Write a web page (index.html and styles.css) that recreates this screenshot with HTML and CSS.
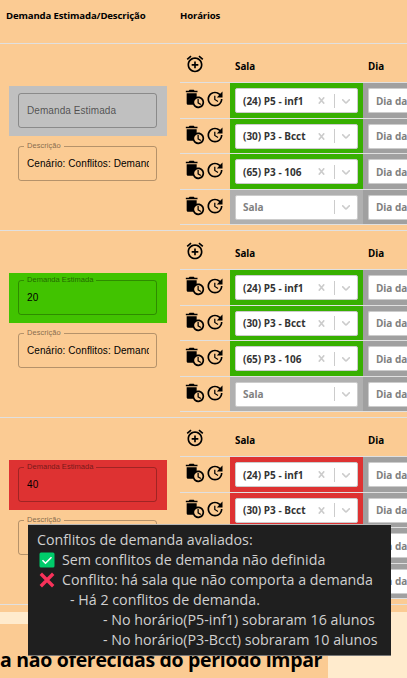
FILE: index.html
```html
<!DOCTYPE html>
<html lang="pt-BR">
<head>
<meta charset="utf-8">
<title>Turmas</title>
<link rel="stylesheet" href="styles.css">
</head>
<body>
<svg class="defs" width="0" height="0" aria-hidden="true">
  <symbol id="alarm" viewBox="0 0 24 24"><path d="M7.88 3.39L6.6 1.86 2 5.71l1.29 1.53 4.59-3.85zM22 5.72l-4.6-3.86-1.29 1.53 4.6 3.86L22 5.72zM12 4c-4.97 0-9 4.03-9 9s4.02 9 9 9c4.97 0 9-4.03 9-9s-4.03-9-9-9zm0 16c-3.87 0-7-3.13-7-7s3.13-7 7-7 7 3.13 7 7-3.13 7-7 7zm1-11h-2v3H8v2h3v3h2v-3h3v-2h-3V9z"/></symbol>
  <symbol id="trash" viewBox="0 0 24 24"><path d="M15 2h-3.5l-1-1h-5l-1 1H1v2h14V2z"/><path d="M16 9c-.7 0-1.37.1-2 .29V5H2v12c0 1.1.9 2 2 2h5.68A6.999 6.999 0 0023 16c0-3.87-3.13-7-7-7zm0 12c-2.76 0-5-2.24-5-5s2.24-5 5-5 5 2.24 5 5-2.24 5-5 5z"/><path d="M16.5 12H15v5l3.6 2.1.8-1.2-2.9-1.7z"/></symbol>
  <symbol id="update" viewBox="0 0 24 24"><path d="M21 10.12h-6.78l2.74-2.82c-2.73-2.7-7.15-2.8-9.88-.1-2.73 2.71-2.73 7.08 0 9.79s7.15 2.71 9.88 0C18.32 15.65 19 14.08 19 12.1h2c0 1.98-.88 4.55-2.64 6.29-3.51 3.48-9.21 3.48-12.72 0-3.5-3.47-3.53-9.11-.02-12.58s9.14-3.47 12.65 0L21 3v7.12zM12.5 8v4.25l3.5 2.08-.72 1.21L11 13V8h1.5z"/></symbol>
  <symbol id="cross" viewBox="0 0 20 20"><path d="M14.348 14.849c-0.469 0.469-1.229 0.469-1.697 0l-2.651-3.030-2.651 3.029c-0.469 0.469-1.229 0.469-1.697 0-0.469-0.469-0.469-1.229 0-1.697l2.758-3.15-2.759-3.152c-0.469-0.469-0.469-1.228 0-1.697s1.228-0.469 1.697 0l2.652 3.031 2.651-3.031c0.469-0.469 1.228-0.469 1.697 0s0.469 1.229 0 1.697l-2.758 3.152 2.758 3.15c0.469 0.469 0.469 1.229 0 1.698z"/></symbol>
  <symbol id="chevron" viewBox="0 0 20 20"><path d="M4.516 7.548c0.436-0.446 1.043-0.481 1.576 0l3.908 3.747 3.908-3.747c0.533-0.481 1.141-0.446 1.574 0 0.436 0.445 0.408 1.197 0 1.615-0.406 0.418-4.695 4.502-4.695 4.502-0.217 0.223-0.502 0.335-0.787 0.335s-0.57-0.112-0.789-0.335c0 0-4.287-4.084-4.695-4.502s-0.436-1.17 0-1.615z"/></symbol>
</svg>

<div class="table">
  <div class="head">
    <div class="th-demand"><span>Demanda Estimada/Descrição</span></div>
    <div class="th-times"><span>Horários</span></div>
  </div>

  <section class="group">
    <div class="fields">
      <div class="demand neutral"><fieldset class="field"><span class="placeholder">Demanda Estimada</span></fieldset></div>
      <fieldset class="field desc"><legend>Descrição</legend><span class="value">Cenário: Conflitos: Demanda</span></fieldset>
    </div>
    <div class="times">
      <div class="times-head"><svg class="icon"><use href="#alarm"/></svg><b class="sala">Sala</b><b>Dia</b></div>
      <div class="row">
        <div class="actions"><svg class="icon"><use href="#trash"/></svg><svg class="icon"><use href="#update"/></svg></div>
        <div class="cell ok"><div class="select"><span>(24) P5 - inf1</span><svg class="ind x"><use href="#cross"/></svg><i></i><svg class="ind"><use href="#chevron"/></svg></div></div>
        <div class="cell day"><div class="select hint"><span>Dia da</span></div></div>
      </div>
      <div class="row">
        <div class="actions"><svg class="icon"><use href="#trash"/></svg><svg class="icon"><use href="#update"/></svg></div>
        <div class="cell ok"><div class="select"><span>(30) P3 - Bcct</span><svg class="ind x"><use href="#cross"/></svg><i></i><svg class="ind"><use href="#chevron"/></svg></div></div>
        <div class="cell day"><div class="select hint"><span>Dia da</span></div></div>
      </div>
      <div class="row">
        <div class="actions"><svg class="icon"><use href="#trash"/></svg><svg class="icon"><use href="#update"/></svg></div>
        <div class="cell ok"><div class="select"><span>(65) P3 - 106</span><svg class="ind x"><use href="#cross"/></svg><i></i><svg class="ind"><use href="#chevron"/></svg></div></div>
        <div class="cell day"><div class="select hint"><span>Dia da</span></div></div>
      </div>
      <div class="row">
        <div class="actions"><svg class="icon"><use href="#trash"/></svg><svg class="icon"><use href="#update"/></svg></div>
        <div class="cell empty"><div class="select hint"><span>Sala</span><i></i><svg class="ind"><use href="#chevron"/></svg></div></div>
        <div class="cell day"><div class="select hint"><span>Dia da</span></div></div>
      </div>
    </div>
  </section>

  <section class="group">
    <div class="fields">
      <div class="demand good"><fieldset class="field"><legend>Demanda Estimada</legend><span class="value">20</span></fieldset></div>
      <fieldset class="field desc"><legend>Descrição</legend><span class="value">Cenário: Conflitos: Demanda</span></fieldset>
    </div>
    <div class="times">
      <div class="times-head"><svg class="icon"><use href="#alarm"/></svg><b class="sala">Sala</b><b>Dia</b></div>
      <div class="row">
        <div class="actions"><svg class="icon"><use href="#trash"/></svg><svg class="icon"><use href="#update"/></svg></div>
        <div class="cell ok"><div class="select"><span>(24) P5 - inf1</span><svg class="ind x"><use href="#cross"/></svg><i></i><svg class="ind"><use href="#chevron"/></svg></div></div>
        <div class="cell day"><div class="select hint"><span>Dia da</span></div></div>
      </div>
      <div class="row">
        <div class="actions"><svg class="icon"><use href="#trash"/></svg><svg class="icon"><use href="#update"/></svg></div>
        <div class="cell ok"><div class="select"><span>(30) P3 - Bcct</span><svg class="ind x"><use href="#cross"/></svg><i></i><svg class="ind"><use href="#chevron"/></svg></div></div>
        <div class="cell day"><div class="select hint"><span>Dia da</span></div></div>
      </div>
      <div class="row">
        <div class="actions"><svg class="icon"><use href="#trash"/></svg><svg class="icon"><use href="#update"/></svg></div>
        <div class="cell ok"><div class="select"><span>(65) P3 - 106</span><svg class="ind x"><use href="#cross"/></svg><i></i><svg class="ind"><use href="#chevron"/></svg></div></div>
        <div class="cell day"><div class="select hint"><span>Dia da</span></div></div>
      </div>
      <div class="row">
        <div class="actions"><svg class="icon"><use href="#trash"/></svg><svg class="icon"><use href="#update"/></svg></div>
        <div class="cell empty"><div class="select hint"><span>Sala</span><i></i><svg class="ind"><use href="#chevron"/></svg></div></div>
        <div class="cell day"><div class="select hint"><span>Dia da</span></div></div>
      </div>
    </div>
  </section>

  <section class="group">
    <div class="fields">
      <div class="demand bad"><fieldset class="field"><legend>Demanda Estimada</legend><span class="value">40</span></fieldset></div>
      <fieldset class="field desc"><legend>Descrição</legend></fieldset>
    </div>
    <div class="times">
      <div class="times-head"><svg class="icon"><use href="#alarm"/></svg><b class="sala">Sala</b><b>Dia</b></div>
      <div class="row">
        <div class="actions"><svg class="icon"><use href="#trash"/></svg><svg class="icon"><use href="#update"/></svg></div>
        <div class="cell over"><div class="select"><span>(24) P5 - inf1</span><svg class="ind x"><use href="#cross"/></svg><i></i><svg class="ind"><use href="#chevron"/></svg></div></div>
        <div class="cell day"><div class="select hint"><span>Dia da</span></div></div>
      </div>
      <div class="row">
        <div class="actions"><svg class="icon"><use href="#trash"/></svg><svg class="icon"><use href="#update"/></svg></div>
        <div class="cell over"><div class="select"><span>(30) P3 - Bcct</span><svg class="ind x"><use href="#cross"/></svg><i></i><svg class="ind"><use href="#chevron"/></svg></div></div>
        <div class="cell day"><div class="select hint"><span>Dia da</span></div></div>
      </div>
      <div class="row">
        <div class="actions"></div>
        <div class="cell empty"></div>
        <div class="cell day"><div class="select hint"><span>Dia da</span></div></div>
      </div>
      <div class="row">
        <div class="actions"></div>
        <div class="cell empty"></div>
        <div class="cell day"><div class="select hint"><span>Dia da</span></div></div>
      </div>
    </div>
  </section>
</div>

<h2 class="title"><span>a não oferecidas do período ímpar</span></h2>

<div class="tooltip">
  <p><span>Conflitos de demanda avaliados:</span></p>
  <p class="mark"><svg viewBox="0 0 16 16"><rect x=".5" y=".5" width="15" height="15" rx="1.5" fill="#00cc6a"/><path d="M3.5 8.2l3 3 6-6" fill="none" stroke="#fff" stroke-width="1.6"/></svg><span>Sem conflitos de demanda não definida</span></p>
  <p class="mark"><svg viewBox="0 0 16 16"><path d="M1.8 1.8l12.4 12.4M14.2 1.8L1.8 14.2" fill="none" stroke="#f8325a" stroke-width="3.4"/></svg><span>Conflito: há sala que não comporta a demanda</span></p>
  <p class="sub"><span>- Há 2 conflitos de demanda.</span></p>
  <p class="subsub"><span>- No horário(P5-inf1) sobraram 16 alunos</span></p>
  <p class="subsub"><span>- No horário(P3-Bcct) sobraram 10 alunos</span></p>
</div>
</body>
</html>
```
FILE: styles.css
```css
* { box-sizing: border-box; }
html { overflow: hidden; }
body {
  margin: 0;
  width: 407px;
  height: 678px;
  overflow: hidden;
  position: relative;
  background: #ffebcd;
  font-family: "Open Sans", "Noto Sans", sans-serif;
  font-size: 10px;
  color: #000;
}
.defs { position: absolute; }
.table { height: 612px; overflow: hidden; background: #fbcb93; }
.head {
  display: flex;
  height: 44px;
  padding: 8px 0 0 6px;
  border-bottom: 1px solid #e0e0e0;
  font-weight: 700;
  font-size: 9.6px;
  letter-spacing: -.15px;
  line-height: 15px;
  white-space: nowrap;
}
.th-demand { width: 174px; }
.group {
  display: grid;
  grid-template-columns: 180px 227px;
  height: 187px;
  border-bottom: 1px solid #e0e0e0;
}
.fields { padding: 42px 0 0 9px; font-family: "Liberation Sans", Arial, sans-serif; }
.times { overflow: hidden; }
.demand { width: 158px; height: 50px; padding: 7px 9px; }
.neutral { background: #c0c0c0; }
.good { background: #41c300; }
.bad { background: #de3232; }
.field {
  position: relative;
  width: 139px;
  height: 35px;
  margin: 0;
  padding: 0 7px 0 8px;
  min-width: 0;
  border: 1px solid rgba(0, 0, 0, .28);
  border-radius: 3px;
}
.desc { margin: 10px 0 0 9px; }
.field legend {
  position: absolute;
  top: -6px;
  left: 5px;
  padding: 0 3px;
  font-size: 7.5px;
  line-height: 10px;
  letter-spacing: .03px;
  color: rgba(0, 0, 0, .5);
  background: #fbcb93;
}
.good legend { background: #41c300; }
.bad legend { background: #de3232; }
.value, .placeholder {
  display: block;
  overflow: hidden;
  white-space: nowrap;
  line-height: 34px;
  font-size: 10px;
  letter-spacing: .08px;
}
.placeholder { color: rgba(0, 0, 0, .6); }
.times-head {
  display: flex;
  align-items: center;
  height: 39px;
  padding-left: 5px;
  border-bottom: 1px solid #e0e0e0;
  font-size: 9.8px;
}
.times-head b { padding-top: 6px; }
.times-head .icon { margin: 2px 30px 0 0; }
.sala { width: 133px; }
.row { display: flex; height: 35.5px; border-bottom: 1px solid #e0e0e0; }
.actions { width: 50px; flex: none; padding: 6.3px 0 0 5px; display: flex; }
.icon { width: 20px; height: 20px; flex: none; }
.cell { width: 133px; padding: 5px; flex: none; }
.cell.day { width: 44px; padding-right: 0; }
.ok { background: #37b000; }
.over { background: #de3232; }
.empty { background: #b0b0b0; }
.day { background: #a0a0a0; }
.select {
  display: flex;
  align-items: center;
  height: 25px;
  padding-left: 7px;
  border: 1px solid #ccc;
  border-radius: 2px;
  background: #fff;
  color: #333;
  font-weight: 700;
  white-space: nowrap;
}
.day .select { border-right: 0; border-radius: 2px 0 0 2px; letter-spacing: -.05px; }
.select span { flex: 1; }
.hint { color: #808080; }
.ind { width: 14px; height: 14px; fill: #ccc; margin: 0 4px; }
.x { width: 13px; height: 13px; margin: 0 6px 0 0; }
.select i { width: 1px; height: 14px; background: #ccc; }
.title {
  width: 328px;
  height: 54px;
  margin: 12px 0 0;
  background: #fbcb93;
  font-size: 19.5px;
  letter-spacing: -.32px;
  line-height: 27px;
  padding-top: 22px;
  white-space: nowrap;
}
.tooltip {
  position: absolute;
  left: 28px;
  top: 524px;
  width: 363px;
  height: 132px;
  padding: 5px 0 0 9px;
  border-top: 1px solid #b8b8b8;
  border-bottom: 1px solid #767676;
  background: #1f1f1f;
  color: #d0d0d0;
  font-size: 14.25px;
  line-height: 20px;
  white-space: nowrap;
}
.tooltip p { margin: 0; }
.mark { display: flex; align-items: center; padding-left: 2px; }
.mark svg { width: 16px; height: 16px; margin-right: 7px; }
.sub { padding-left: 33px; }
.subsub { padding-left: 66px; }
```
